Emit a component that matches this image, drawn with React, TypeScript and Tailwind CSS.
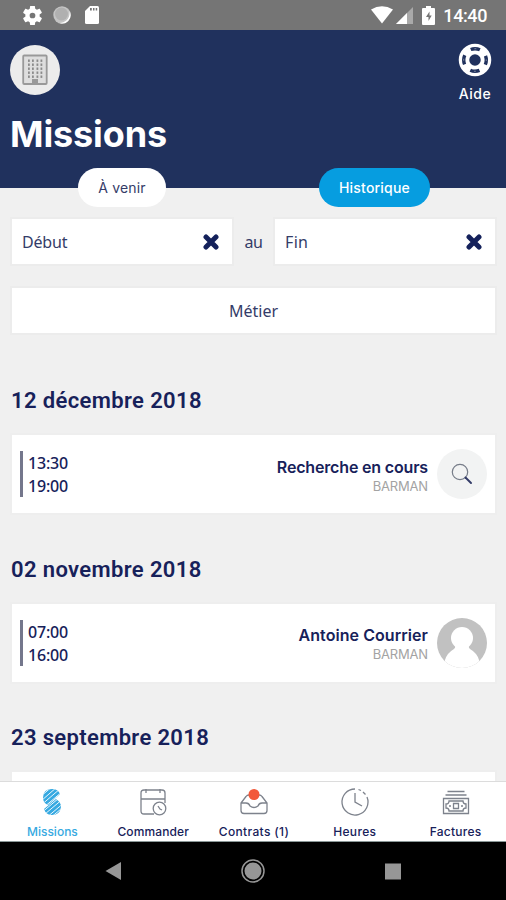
import React from 'react';

const inter = 'font-[Inter,sans-serif]';

function Fit({ w, className = '', children }: { w: number; className?: string; children: string }) {
  const ref = React.useRef<HTMLSpanElement>(null);
  const [gap, setGap] = React.useState(0);
  React.useLayoutEffect(() => {
    if (ref.current) setGap((w - ref.current.offsetWidth) / children.length);
  }, [w, children]);
  return (
    <span ref={ref} className={`inline-block whitespace-nowrap ${className}`} style={{ letterSpacing: gap }}>
      {children}
    </span>
  );
}

function StatusBar() {
  return (
    <div className="flex h-[30px] shrink-0 items-center bg-[#757575] pl-[22px] pr-[19px] font-[Roboto,sans-serif] text-white">
      <svg width="21" height="21" viewBox="1 1 22 22" fill="#fff">
        <path d="M19.4 13c.1-.3.1-.7.1-1s0-.7-.1-1l2.2-1.7c.2-.1.2-.4.1-.6l-2-3.500c-.1-.2-.4-.3-.6-.2l-2.500 1a7.500 7.500 0 0 0-1.700-1l-.4-2.600c0-.3-.2-.4-.5-.4h-4c-.2 0-.4.100-.5.400L9.100 5c-.6.200-1.200.600-1.700 1l-2.500-1c-.2-.1-.5 0-.6.200l-2 3.500c-.1.200-.1.400.1.600L4.600 11a7 7 0 0 0 0 2l-2.200 1.700c-.2.100-.2.400-.1.600l2 3.500c.1.200.4.300.6.200l2.500-1c.5.400 1.100.700 1.700 1l.4 2.600c0 .300.200.400.5.400h4c.3 0 .5-.1.500-.4l.4-2.600c.6-.2 1.200-.6 1.700-1l2.500 1c.2.100.5 0 .6-.2l2-3.500c.1-.2.1-.4-.1-.6zM12 15a3 3 0 1 1 0-6 3 3 0 0 1 0 6z" fillRule="evenodd" />
      </svg>
      <svg className="ml-[10px]" width="18" height="18" viewBox="0 0 18 18">
        <circle cx="9" cy="9" r="8.700" fill="#c4c4c4" />
        <path d="M16.500 5a8.400 8.400 0 0 1-10 12c6 0 11-5 10-12" fill="#fff" />
        <circle cx="8.500" cy="8" r="6.500" fill="#b0b0b0" />
      </svg>
      <svg className="ml-[13px]" width="16" height="20" viewBox="0 0 16 20">
        <path d="M6 1h7.500q1.500 0 1.500 1.500v15q0 1.500-1.500 1.500h-11Q1 19 1 17.500V6z" fill="#fff" />
        <path d="M6 3h1.800v2.500H6zm3 0h1.500v2.500H9zm2.700 0h1.500v2.500h-1.500z" fill="#757575" />
      </svg>
      <svg className="ml-auto" width="22" height="18" viewBox="0 0 22 18">
        <path d="M0 3.600Q11-3.200 22 3.600L11 17.500z" fill="#fff" />
      </svg>
      <svg className="ml-[3px]" width="17" height="17" viewBox="0 0 17 17">
        <path d="M17 0v17H0z" fill="#a9a9a9" />
        <path d="M11 6v11H0z" fill="#fff" />
      </svg>
      <svg className="ml-[9px]" width="13" height="19" viewBox="0 0 13 19">
        <path d="M4 0h5v2h3q1 0 1 1v15q0 1-1 1H1q-1 0-1-1V3q0-1 1-1h3z" fill="#fff" />
        <path d="M7.500 5.500 4 11h2.500v4l3.200-5.500H7.500z" fill="#757575" />
      </svg>
      <span className="ml-2 pt-0.5 text-[18px] font-medium leading-6">
        <Fit w={44}>14:40</Fit>
      </span>
    </div>
  );
}

function Building() {
  const rows = [5, 9, 13, 17, 21];
  return (
    <svg width="26" height="32" viewBox="0 0 26 32">
      <rect x="1.200" y="1.500" width="23.500" height="28.500" rx="1" fill="#dedede" stroke="#999" strokeWidth="1.800" />
      {rows.map((y) =>
        [6, 10, 14.500, 18.500].map((x) => <rect key={`${x}-${y}`} x={x} y={y + 0.500} width="1.800" height="2.400" fill="#8a8a8a" />),
      )}
      <rect x="10" y="25" width="6" height="4.500" fill="#999" />
    </svg>
  );
}

function Lifebuoy() {
  return (
    <svg width="34" height="34" viewBox="0 0 34 34">
      <circle cx="17" cy="17" r="11" fill="none" stroke="#fff" strokeWidth="10.500" />
      <circle cx="17" cy="17" r="11.300" fill="none" stroke="#20315d" strokeWidth="3.400" strokeDasharray="9.400 8.350" strokeDashoffset="4.700" />
      <circle cx="17" cy="17" r="11.300" fill="none" stroke="#8f98ae" strokeWidth="1" strokeDasharray="2 15.750" strokeDashoffset="1" />
    </svg>
  );
}

function Cross() {
  return (
    <svg width="16" height="16" viewBox="0 0 16 16">
      <path d="m3 3 10 10M13 3 3 13" stroke="#14215b" strokeWidth="5" strokeLinecap="round" />
    </svg>
  );
}

function DateField({ label, width, cls }: { label: string; width: number; cls: string }) {
  return (
    <div className={`flex h-[49px] items-center justify-between border-2 border-[#ececec] bg-white pl-[10px] pr-[13px] ${cls}`}>
      <Fit w={width}>{label}</Fit>
      <Cross />
    </div>
  );
}

function SearchAvatar() {
  return (
    <div className="flex size-[50px] items-center justify-center rounded-full bg-[#f2f3f3]">
      <svg width="22" height="22" viewBox="0 0 22 22" fill="none">
        <circle cx="9" cy="9" r="7.700" stroke="#777d89" strokeWidth="1.200" />
        <path d="m14.500 14.500 5.500 5.500" stroke="#343c68" strokeWidth="2" strokeLinecap="round" />
      </svg>
    </div>
  );
}

function PersonAvatar() {
  return (
    <div className="size-[50px] overflow-hidden rounded-full bg-[#c1c1c1]">
      <svg width="50" height="50" viewBox="0 0 50 50">
        <circle cx="25" cy="20" r="11" fill="#fff" />
        <path d="M18 26h14q-1 3 1 5 7 4 9 11l3 10H5l3-10q2-7 9-11 2-2 1-5" fill="#fff" />
      </svg>
    </div>
  );
}

type Mission = { date: string; dw: number; start: string; end: string; name: string; nw: number; avatar: React.ReactNode };

const missions: Mission[] = [
  { date: '12 décembre 2018', dw: 191, start: '13:30', end: '19:00', name: 'Recherche en cours', nw: 151, avatar: <SearchAvatar /> },
  { date: '02 novembre 2018', dw: 191, start: '07:00', end: '16:00', name: 'Antoine Courrier', nw: 129, avatar: <PersonAvatar /> },
];

function DateHeading({ text, width }: { text: string; width: number }) {
  return (
    <h2 className="pl-px font-[Roboto,sans-serif] text-[22px] font-semibold leading-[28px]">
      <Fit w={width}>{text}</Fit>
    </h2>
  );
}

function MissionGroup({ m }: { m: Mission }) {
  return (
    <section className="h-[168.500px] shrink-0">
      <DateHeading text={m.date} width={m.dw} />
      <div className="mt-[18px] flex h-[82px] items-center border-2 border-[#eee] bg-white pl-2 pr-2">
        <div className="border-l-[3px] border-[#74778c] pl-[5px] font-['Noto_Sans',sans-serif] text-[16px] font-medium leading-[23px]">
          <div><Fit w={40} className="relative top-px">{m.start}</Fit></div>
          <div><Fit w={40} className="relative top-px">{m.end}</Fit></div>
        </div>
        <div className={`ml-auto mr-[9px] flex flex-col items-end pt-[3px] ${inter}`}>
          <span className="text-[16px] font-semibold leading-[21px]"><Fit w={m.nw}>{m.name}</Fit></span>
          <span className="text-[13px] leading-[17px] text-[#a3a3a3]"><Fit w={55}>BARMAN</Fit></span>
        </div>
        {m.avatar}
      </div>
    </section>
  );
}

function IconSvg({ children }: { children: React.ReactNode }) {
  return (
    <svg width="30" height="30" viewBox="0 0 30 30" fill="none" stroke="#7d828c" strokeWidth="1.300">
      {children}
    </svg>
  );
}

const tabs = [
  {
    label: 'Missions', w: 51,
    icon: (
      <IconSvg>
        <clipPath id="s"><path d="M23 7Q21 2 15 2 6 2 6 11q0 5 5 7zM19 12q5 3 5 8-1 8-9 8-6 0-8-6z" /></clipPath>
        <g clipPath="url(#s)">
          <path d="M0 0h30v30H0z" fill="#36a9e1" stroke="none" />
          <path d="M3 10 17-2M4 14 20 0M6 16.500 24 1M6 21 26 4M6 24.500 25 8.500M8 27 27 11M9 31 28 15M12 32 30 17" stroke="#fff" strokeWidth=".9" />
        </g>
      </IconSvg>
    ),
  },
  {
    label: 'Commander', w: 72,
    icon: (
      <IconSvg>
        <path d="M16 27H6q-3 0-3-3V6q0-3 3-3h18q3 0 3 3v10M3 12h24M8 2v4M22 2v4" />
        <circle cx="21.500" cy="21.500" r="6.300" /><path d="m20 19 2 3 2 1" />
      </IconSvg>
    ),
  },
  {
    label: 'Contrats (1)', w: 70,
    icon: (
      <IconSvg>
        <path d="M2 16v7.500q0 3 3 3h20q3 0 3-3V16l-5-6.500q-1-1.500-3-1.500H10Q8 8 7 9.500zM2 16h5q3 0 4 3 4 3 8 0 1-3 4-3h5" />
        <circle cx="15" cy="7.500" r="5.500" fill="#f2593a" stroke="none" />
      </IconSvg>
    ),
  },
  {
    label: 'Heures', w: 43,
    icon: (
      <IconSvg>
        <path d="M15 2a13 13 0 1 0 12 8M18.500 2.500l2.500 1M23 5l2.500 2.500M15 6v9l7 4" />
      </IconSvg>
    ),
  },
  {
    label: 'Factures', w: 52,
    icon: (
      <IconSvg>
        <path d="M6.500 4.500h17M4.500 8h21M2.500 11.500h25v15h-25z" />
        <path d="M8 14h14q0 3 3 3v4q-3 0-3 3H8q0-3-3-3v-4q3 0 3-3zM12.500 16.500h5v5h-5zM8 19h2m10 0h2" />
      </IconSvg>
    ),
  },
];

export default function App() {
  return (
    <div className={`flex h-[900px] w-[506px] flex-col overflow-hidden bg-[#f0f0f0] text-[#17215a] ${inter}`}>
      <StatusBar />
      <header className="relative h-[158px] shrink-0 bg-[#20315d] px-[10px] pt-[15px] text-white">
        <div className="flex justify-between">
          <div className="flex size-[50px] items-center justify-center rounded-full bg-[#ececec]"><Building /></div>
          <div className="-mt-[2px] mr-[4px] flex flex-col items-center">
            <Lifebuoy />
            <span className="mt-[6px] text-[14px] font-medium leading-[22px]"><Fit w={32}>Aide</Fit></span>
          </div>
        </div>
        <h1 className="mt-[5px] text-[36px] font-bold leading-[48px]"><Fit w={157}>Missions</Fit></h1>
        <button className="absolute left-[78px] top-[138px] h-[39px] w-[88px] rounded-full bg-white text-[14px] text-[#343c68]"><Fit w={47}>À venir</Fit></button>
        <button className="absolute left-[319px] top-[138px] h-[39px] w-[111px] rounded-full bg-[#069de0] text-[14px] font-medium"><Fit w={71}>Historique</Fit></button>
      </header>
      <main className="flex min-h-0 flex-1 flex-col overflow-hidden pl-[10px] pr-[9px] pt-[29px]">
        <div className="flex shrink-0 items-center font-['Noto_Sans',sans-serif] text-[16px] text-[#343c68]">
          <DateField label="Début" width={45} cls="w-[224px]" />
          <span className="w-[39px] text-center"><Fit w={18}>au</Fit></span>
          <DateField label="Fin" width={23} cls="w-[224px]" />
        </div>
        <div className="mb-[52px] mt-5 flex h-[49px] shrink-0 items-center justify-center border-2 border-[#ececec] bg-white font-['Noto_Sans',sans-serif] text-[16px] text-[#343c68]">
          <Fit w={49}>Métier</Fit>
        </div>
        {missions.map((m) => <MissionGroup key={m.date} m={m} />)}
        <DateHeading text="23 septembre 2018" width={198} />
        <div className="mt-[18px] h-20 shrink-0 border-2 border-[#eee] bg-white" />
      </main>
      <nav className="grid h-[61px] shrink-0 grid-cols-5 border-b border-t border-b-[#8b9898] border-t-[#dcdcdc] bg-white pl-[2px]">
        {tabs.map((t, i) => (
          <div key={t.label} className={`flex flex-col items-center pt-[5px] text-[12px] font-medium leading-[18px] ${i === 0 ? 'text-[#36a9e1]' : ''}`}>
            {t.icon}
            <span className="mt-[6px]"><Fit w={t.w}>{t.label}</Fit></span>
          </div>
        ))}
      </nav>
      <div className="flex h-[58px] shrink-0 items-center justify-center bg-black">
        <svg width="300" height="28" viewBox="0 0 300 28" fill="#969696">
          <path d="M2.500 14 18 5v18z" />
          <circle cx="150" cy="14" r="8.500" />
          <circle cx="150" cy="14" r="11" fill="none" stroke="#969696" strokeWidth="1.500" />
          <path d="M282 6.500h16v16h-16z" />
        </svg>
      </div>
    </div>
  );
}
